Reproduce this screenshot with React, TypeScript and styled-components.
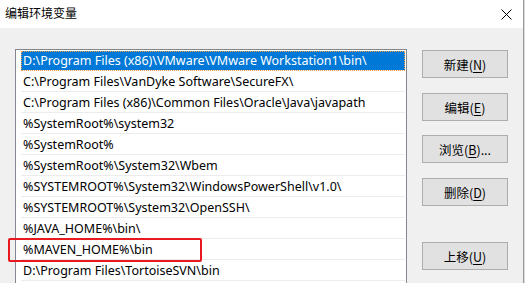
import React from "react";
import styled, { createGlobalStyle } from "styled-components";

const Global = createGlobalStyle`
  html, body { margin: 0; padding: 0; background: #d9d9d9; }
  body { font-family: "Noto Sans", "Noto Sans CJK SC", sans-serif; }
`;

const Window = styled.div`
  position: relative;
  width: 523px;
  height: 283px;
  overflow: hidden;
  background: #f0f0f0;
  border-right: 1px solid #9a9a9a;
  display: flex;
  flex-direction: column;
`;

const TitleBar = styled.div`
  height: 28px;
  flex: none;
  background: #ffffff;
  display: flex;
  align-items: center;
  justify-content: space-between;
  padding: 0 11px 0 5px;
`;

const Title = styled.span`
  font-family: "Noto Sans CJK SC", sans-serif;
  font-size: 12px;
  color: #000;
  line-height: 1;
  margin-top: -2px;
`;

const Body = styled.div`
  flex: 1;
  display: flex;
  align-items: flex-start;
  padding: 21px 0 0 15px;
  gap: 15px;
`;

const List = styled.div`
  box-sizing: border-box;
  width: 392px;
  height: 262px;
  flex: none;
  background: #fff;
  border: 1px solid #828790;
  padding: 1px 1px 0 5px;
  display: flex;
  flex-direction: column;
`;

const Row = styled.div<{ $selected?: boolean }>`
  height: 20px;
  flex: none;
  box-sizing: border-box;
  border-bottom: 1px solid #ececec;
  display: flex;
  align-items: center;
  padding-left: 2px;
  font-family: "Noto Sans", "Noto Sans CJK SC", sans-serif;
  font-size: 12.5px;
  white-space: nowrap;
  color: ${(p) => (p.$selected ? "#fff" : "#000")};
  background: ${(p) => (p.$selected ? "#0078d7" : "transparent")};
  outline: ${(p) => (p.$selected ? "1px dotted #f5a04a" : "none")};
  outline-offset: -1px;
  & + & { height: 21px; }
`;

const Buttons = styled.div`
  width: 86px;
  display: flex;
  flex-direction: column;
  padding-top: 1px;
`;

const Button = styled.button<{ $gap?: number }>`
  height: 28px;
  width: 86px;
  margin-top: ${(p) => p.$gap ?? 0}px;
  background: #e1e1e1;
  border: 1px solid #adadad;
  border-radius: 0;
  padding: 0;
  font-family: "Noto Sans CJK SC", sans-serif;
  font-size: 12.5px;
  color: #000;
  display: flex;
  align-items: center;
  justify-content: center;
`;

const U = styled.span`
  text-decoration: underline;
  text-underline-offset: 2px;
`;

const Highlight = styled.div`
  position: absolute;
  left: 8px;
  top: 238px;
  width: 190px;
  height: 20px;
  border: 2px solid #e8191f;
  border-radius: 2px;
  pointer-events: none;
`;

const CloseIcon = () => (
  <svg width="11" height="11" viewBox="0 0 11 11">
    <path d="M0.5 0.5 L10.5 10.5 M10.5 0.5 L0.5 10.5" stroke="#000" strokeWidth="1" />
  </svg>
);

const paths = [
  "D:\\Program Files (x86)\\VMware\\VMware Workstation1\\bin\\",
  "C:\\Program Files\\VanDyke Software\\SecureFX\\",
  "C:\\Program Files (x86)\\Common Files\\Oracle\\Java\\javapath",
  "%SystemRoot%\\system32",
  "%SystemRoot%",
  "%SystemRoot%\\System32\\Wbem",
  "%SYSTEMROOT%\\System32\\WindowsPowerShell\\v1.0\\",
  "%SYSTEMROOT%\\System32\\OpenSSH\\",
  "%JAVA_HOME%\\bin\\",
  "%MAVEN_HOME%\\bin",
  "D:\\Program Files\\TortoiseSVN\\bin",
];

const buttons: { label: string; key: string; suffix?: string; gap: number }[] = [
  { label: "新建", key: "N", gap: 0 },
  { label: "编辑", key: "E", gap: 15 },
  { label: "浏览", key: "B", suffix: "...", gap: 14 },
  { label: "删除", key: "D", gap: 15 },
  { label: "上移", key: "U", gap: 36 },
];

export default function App() {
  return (
    <>
      <Global />
      <Window>
        <TitleBar>
          <Title>编辑环境变量</Title>
          <CloseIcon />
        </TitleBar>
        <Body>
          <List>
            {paths.map((p, i) => (
              <Row key={i} $selected={i === 0}>
                {p}
              </Row>
            ))}
          </List>
          <Buttons>
            {buttons.map((b) => (
              <Button key={b.key} $gap={b.gap}>
                {b.label}(<U>{b.key}</U>){b.suffix ?? ""}
              </Button>
            ))}
          </Buttons>
        </Body>
        <Highlight />
      </Window>
    </>
  );
}
